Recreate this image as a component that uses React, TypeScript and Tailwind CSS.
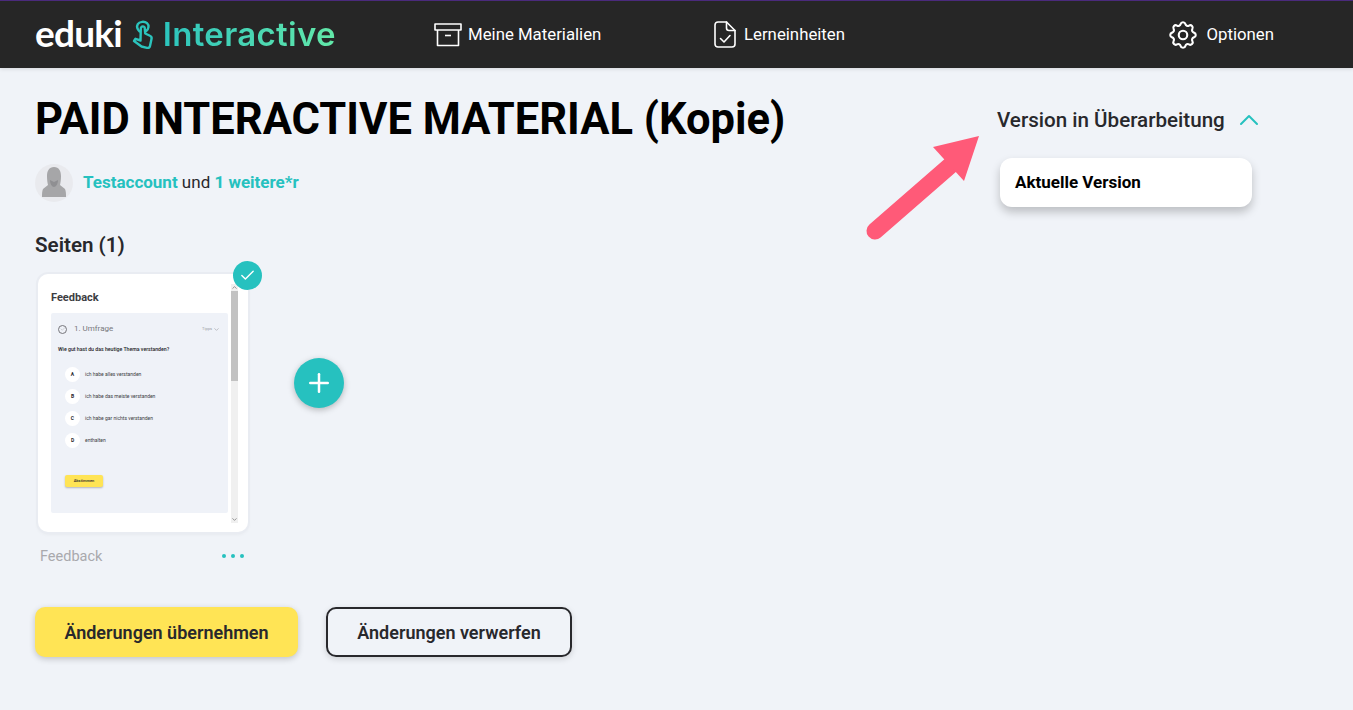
import React from "react";
import { Check, ChevronDown, ChevronUp, Plus } from "lucide-react";
import { TbSettings } from "react-icons/tb";

const HandIcon = () => (
  <svg width="22" height="30" viewBox="0 0 22 30" fill="none" stroke="#2bc4bd" strokeWidth="2.4" strokeLinejoin="round" strokeLinecap="round">
    <path d="M7.5 11.5C5 9 4.5 6.5 5.8 4.2C7.4 1.4 12.6 1 15 3.2C17.4 5.4 16.8 9 14.2 11" />
    <path d="M8.8 9C8.6 7.6 9.6 6.4 10.8 6.4C12 6.4 13 7.4 12.8 8.8L13.2 13.5L17.5 15.5C19.2 16.2 20 17.4 19.5 19L18 26C17.7 27.5 16.5 28.2 15 27.8L9.5 26.5L2 21L3.5 18.8L8.5 20.5Z" />
  </svg>
);

const ArchiveIcon = () => (
  <svg width="28" height="24" viewBox="0 0 28 24" fill="none" stroke="white" strokeWidth="1.6" strokeLinejoin="round">
    <path d="M1 1H27V7H1Z" />
    <path d="M3.5 7V22.5H24.5V7" />
    <path d="M11 12.5H17" />
  </svg>
);

const DocCheckIcon = () => (
  <svg width="22" height="27" viewBox="0 0 22 27" fill="none" stroke="white" strokeWidth="1.6" strokeLinejoin="round" strokeLinecap="round">
    <path d="M4 1H12.5L21 9.5V23C21 24.8 19.8 26 18 26H4C2.2 26 1 24.8 1 23V4C1 2.2 2.2 1 4 1Z" />
    <path d="M12.5 1V7C12.5 8.5 13.5 9.5 15 9.5H21" />
    <path d="M6.5 17.5L10 21L16 14.5" />
  </svg>
);

const Avatar = () => (
  <div className="w-[38px] h-[38px] rounded-full bg-[#e9eaee] overflow-hidden flex items-end justify-center">
    <svg width="24" height="30" viewBox="0 0 24 30" className="mb-[5px]">
      <path d="M12 0C17 0 19 4 19 9C19 13 18.5 16 18 18L23 22C24 24 24 27 24 30H0C0 27 0 24 1 22L6 18C5.500 16 5 13 5 9C5 4 7 0 12 0Z" fill="#a6a6a8" />
      <path d="M8 13C8 17 10 20 12 20C14 20 16 17 16 13L12 15Z" fill="#8f8f92" />
    </svg>
  </div>
);

const answers = [
  { letter: "A", text: "ich habe alles verstanden" },
  { letter: "B", text: "ich habe das meiste verstanden" },
  { letter: "C", text: "ich habe gar nichts verstanden" },
  { letter: "D", text: "enthalten" },
];

const PageCard = () => (
  <div className="relative w-[210px] h-[258px] bg-white rounded-[10px] shadow-[0_0_0_2px_#e9ecf2,0_2px_4px_rgba(0,0,0,0.06)] pl-[13px] pt-[10px] flex">
    <div className="w-[177px] shrink-0">
      <div className="text-[11px] leading-[14px] mt-[7px] mb-[8px] font-bold text-[#3d3d42]">Feedback</div>
      <div className="h-[200px] bg-[#eff2f8] rounded-[2px] px-[7px] pt-[9px]">
        <div className="flex items-center h-[14px]">
          <div className="w-[9px] h-[9px] rounded-full border border-[#77777c] flex items-center justify-center">
            <Check size={6} strokeWidth={1.5} className="text-[#9a9a9f]" />
          </div>
          <span className="ml-[7px] text-[8px] text-[#77777c]">1. Umfrage</span>
          <span className="ml-auto text-[4px] text-[#9a9a9f]">Tipps</span>
          <ChevronDown size={7} className="ml-[1px] mr-[1px] text-[#9a9a9f]" />
        </div>
        <div className="text-[5.2px] leading-[6px] mt-[10px] font-medium text-[#222226]">Wie gut hast du das heutige Thema verstanden?</div>
        <div className="mt-[15px] ml-[7px] flex flex-col gap-[7px]">
          {answers.map((a) => (
            <div key={a.letter} className="flex items-center h-[15px]">
              <div className="w-[15px] h-[15px] rounded-full bg-white flex items-center justify-center text-[5px] font-bold text-[#28282c]">{a.letter}</div>
              <span className="ml-[5px] text-[5px] text-[#3d3d42]">{a.text}</span>
            </div>
          ))}
        </div>
        <div className="mt-[27px] ml-[7px] w-[38px] h-[12px] rounded-[2px] bg-[#ffe455] shadow-[0_1px_2px_rgba(0,0,0,0.25)] flex items-center justify-center text-[4px] font-medium text-[#28282c]">Abstimmen</div>
      </div>
    </div>
    <div className="ml-[3px] w-[7px] h-[239px] bg-[#f0f0f0] flex flex-col items-center">
      <ChevronUp size={7} className="text-[#555] shrink-0" />
      <div className="w-full h-[90px] bg-[#c2c2c2]" />
      <div className="flex-1" />
      <ChevronDown size={7} className="text-[#555] shrink-0" />
    </div>
    <div className="absolute -top-[13px] -right-[14px] w-[29px] h-[29px] rounded-full bg-[#26c1bf] flex items-center justify-center">
      <Check size={17} strokeWidth={2} className="text-white" />
    </div>
  </div>
);

export default function App() {
  return (
    <div className="relative min-h-[710px] bg-[#f0f3f8] font-['Roboto',sans-serif] text-[#28282c] overflow-hidden">
      <header className="h-[68px] bg-[#262626] border-t border-[#4a2a7c] flex items-center pl-[35px] shadow-[0_1px_4px_rgba(0,0,0,0.12)]">
        <div className="flex items-center w-[399px]">
          <span className="font-['Lato',sans-serif] font-bold text-[37px] leading-none tracking-[-0.8px] text-white -mt-[4px]">eduki</span>
          <span className="ml-[10px]"><HandIcon /></span>
          <span className="ml-[9px] font-['Inter',sans-serif] font-semibold text-[33px] leading-none tracking-[0.3px] bg-gradient-to-r from-[#2bc4bd] to-[#62e8a8] bg-clip-text text-transparent">Interactive</span>
        </div>
        <div className="flex items-center w-[280px] text-white text-[16.8px]">
          <ArchiveIcon />
          <span className="ml-[6px]">Meine Materialien</span>
        </div>
        <div className="flex items-center text-white text-[16.8px]">
          <DocCheckIcon />
          <span className="ml-[8px]">Lerneinheiten</span>
        </div>
        <div className="ml-auto mr-[79px] flex items-center text-white text-[16.8px]">
          <TbSettings size={34} strokeWidth={1.5} />
          <span className="ml-[6px]">Optionen</span>
        </div>
      </header>

      <main className="flex justify-between pl-[35px] pr-[94px]">
        <div>
          <h1 className="text-[43.5px] leading-[50px] font-bold text-black mt-[27px] whitespace-nowrap">PAID INTERACTIVE MATERIAL (Kopie)</h1>
          <div className="flex items-center mt-[19px]">
            <Avatar />
            <div className="ml-[10px] text-[17px]">
              <span className="font-bold text-[#26c1bf]">Testaccount</span> und{" "}
              <span className="font-bold text-[#26c1bf]">1 weitere*r</span>
            </div>
          </div>
          <h2 className="mt-[30px] text-[20.6px] leading-[26px] font-semibold">Seiten (1)</h2>
          <div className="flex items-start ml-[3px] mt-[16px]">
            <div>
              <PageCard />
              <div className="flex items-center justify-between mt-[16px] pl-[2px] pr-[4px] w-[210px]">
                <span className="text-[14.5px] leading-[18px] text-[#a9a9ad]">Feedback</span>
                <div className="flex gap-[5px] -mt-[3px]">
                  <span className="w-[4px] h-[4px] rounded-full bg-[#26c1bf]" />
                  <span className="w-[4px] h-[4px] rounded-full bg-[#26c1bf]" />
                  <span className="w-[4px] h-[4px] rounded-full bg-[#26c1bf]" />
                </div>
              </div>
            </div>
            <button className="ml-[46px] mt-[84px] w-[50px] h-[50px] rounded-full bg-[#26c1bf] shadow-[0_2px_6px_rgba(0,0,0,0.25)] flex items-center justify-center">
              <Plus size={30} strokeWidth={2} className="text-white" />
            </button>
          </div>
          <div className="flex gap-[28px] mt-[41px]">
            <button className="w-[263px] h-[50px] rounded-[10px] bg-[#ffe455] shadow-[0_2px_6px_rgba(0,0,0,0.2)] text-[18px] font-semibold">Änderungen übernehmen</button>
            <button className="w-[246px] h-[50px] rounded-[10px] border-2 border-[#28282c] shadow-[0_2px_6px_rgba(0,0,0,0.15)] text-[18px] font-semibold">Änderungen verwerfen</button>
          </div>
        </div>

        <div className="w-[262px] mt-[39px]">
          <div className="flex items-center h-[26px]">
            <span className="text-[20.6px] font-medium whitespace-nowrap">Version in Überarbeitung</span>
            <ChevronUp size={32} strokeWidth={1.5} className="ml-[8px] shrink-0 text-[#26c1bf]" />
          </div>
          <div className="ml-[3px] mt-[25px] w-[252px] h-[49px] rounded-[12px] bg-white shadow-[0_5px_10px_rgba(0,0,0,0.22)] flex items-center pl-[15px] text-[17px] font-bold text-black">Aktuelle Version</div>
        </div>
      </main>

      <svg className="absolute left-[860px] top-[130px]" width="124" height="114" viewBox="0 0 124 114" fill="none">
        <path d="M15 101L92 34" stroke="#ff5a78" strokeWidth="17" strokeLinecap="round" />
        <path d="M119 6L73 17L104 51Z" fill="#ff5a78" />
      </svg>
    </div>
  );
}
